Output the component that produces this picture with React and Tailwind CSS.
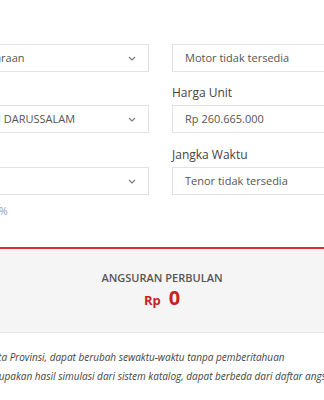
import React from "react";

function Chevron() {
  return (
    <svg width="8" height="5" viewBox="0 0 8 5" className="shrink-0">
      <path d="M1 1l3 3 3-3" fill="none" stroke="#777" strokeWidth="1.1" />
    </svg>
  );
}

function SelectBox({ text }) {
  return (
    <div className="h-[28px] bg-white border border-[#e2e2e2] flex items-center justify-between pl-[12px] pr-[12px]">
      <span className="text-[11px] text-[#555] whitespace-nowrap">{text}</span>
      <Chevron />
    </div>
  );
}

function InputBox({ text }) {
  return (
    <div className="h-[28px] bg-white border border-[#e2e2e2] flex items-center pl-[12px]">
      <span className="text-[11px] text-[#555] whitespace-nowrap">{text}</span>
    </div>
  );
}

function Label({ children }) {
  return (
    <div className="text-[12px] leading-4 text-[#444] mb-1 h-4 whitespace-nowrap">
      {children}
    </div>
  );
}

export default function App() {
  return (
    <div
      className="w-[324px] h-[400px] overflow-hidden bg-white"
      style={{ fontFamily: '"Open Sans", "Noto Sans", sans-serif' }}
    >
      {/* form */}
      <div className="flex gap-[23px] ml-[-104px] pt-[44px]">
        <div className="w-[253px] shrink-0 flex flex-col">
          <SelectBox text="Pilih Model Kendaraan" />
          <div className="mt-[13px]">
            <Label>Provinsi</Label>
            <SelectBox text="NANGGROE ACEH DARUSSALAM" />
          </div>
          <div className="mt-[14px]">
            <Label>Uang Muka</Label>
            <SelectBox text="" />
          </div>
          <div className="mt-[8px] ml-[-14px] text-[11px] leading-4 text-[#8fa2c2] whitespace-nowrap">
            Minimal uang muka 20%
          </div>
        </div>
        <div className="w-[248px] shrink-0 flex flex-col">
          <InputBox text="Motor tidak tersedia" />
          <div className="mt-[13px]">
            <Label>Harga Unit</Label>
            <InputBox text="Rp 260.665.000" />
          </div>
          <div className="mt-[14px]">
            <Label>Jangka Waktu</Label>
            <InputBox text="Tenor tidak tersedia" />
          </div>
        </div>
      </div>

      {/* hasil */}
      <div className="mt-[28px] border-t-2 border-[#d32f2f] border-b border-b-[#e6e6e6] bg-[#f5f5f5] h-[86px] pt-[21px] flex flex-col items-center">
        <div className="text-[11px] leading-4 font-semibold text-[#555]">
          ANGSURAN PERBULAN
        </div>
        <div className="flex items-baseline gap-[8px] text-[#cc1f1f] font-bold leading-6">
          <span className="text-[13px]">Rp</span>
          <span className="text-[20px]">0</span>
        </div>
      </div>

      {/* catatan */}
      <div className="ml-[-69px] mt-[15px] italic text-[10px] leading-[19px] text-[#444] whitespace-nowrap">
        <div>*Harga OTR Kota Provinsi, dapat berubah sewaktu-waktu tanpa pemberitahuan</div>
        <div>*Angsuran merupakan hasil simulasi dari sistem katalog, dapat berbeda dari daftar angsuran dealer</div>
      </div>
    </div>
  );
}
